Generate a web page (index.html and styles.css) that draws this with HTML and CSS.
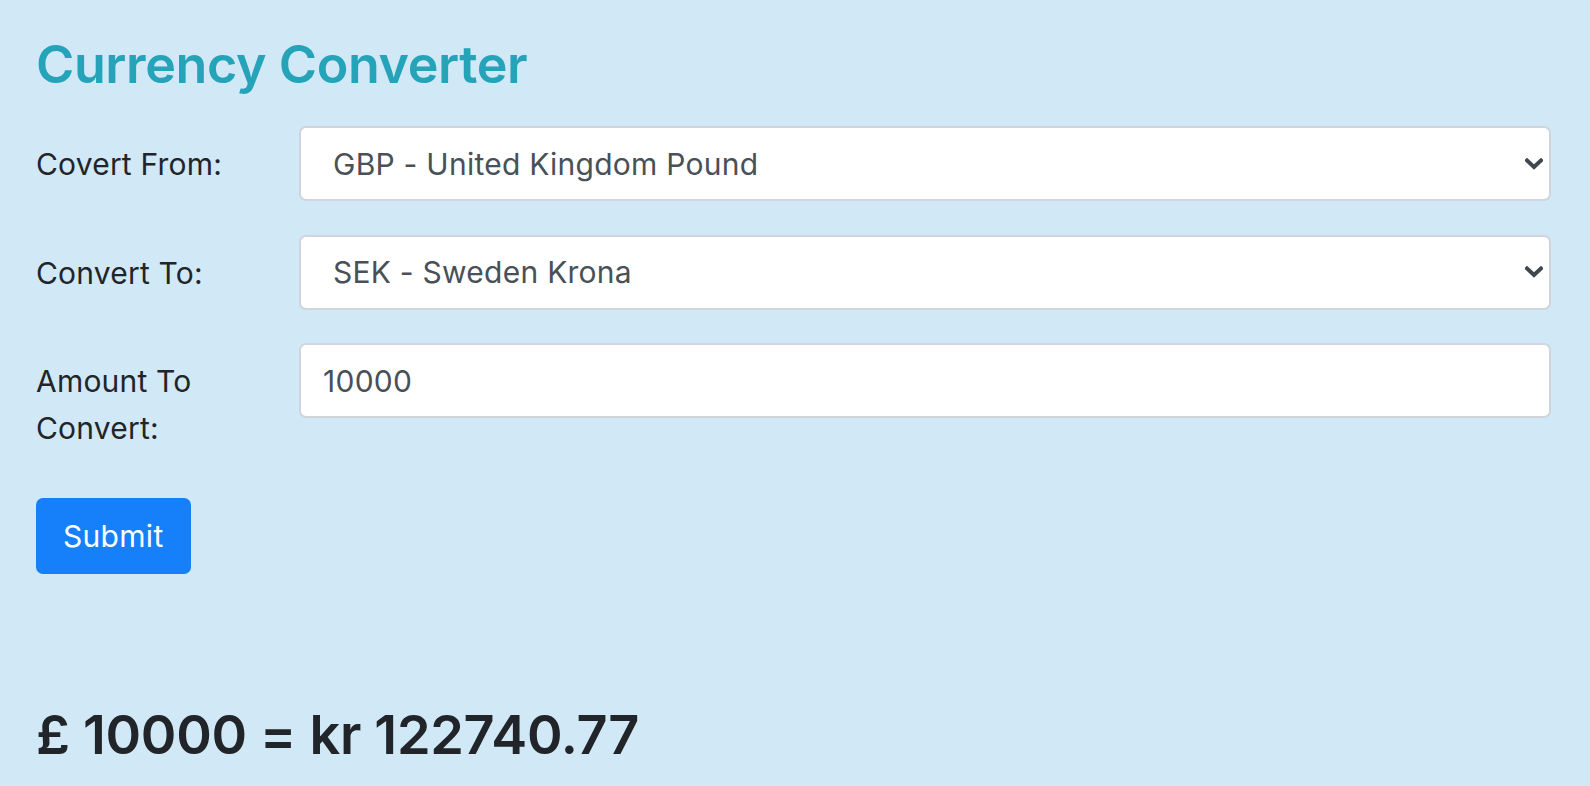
FILE: index.html
```html
<!DOCTYPE html>
<html lang="en">
<head>
<meta charset="utf-8">
<title>Currency Converter</title>
<link rel="stylesheet" href="styles.css">
</head>
<body>
<main class="page">
  <h2 class="title">Currency Converter</h2>
  <form class="form">
    <div class="row">
      <label class="label" for="from">Covert From:</label>
      <div class="select-wrap">
        <select id="from" class="control select">
          <option>GBP - United Kingdom Pound</option>
        </select>
        <svg class="chevron" width="18" height="12" viewBox="0 0 18 12" aria-hidden="true"><polyline points="2,2.5 9,9 16,2.5" fill="none" stroke="#41474e" stroke-width="4" stroke-linecap="square" stroke-linejoin="miter"/></svg>
      </div>
    </div>
    <div class="row">
      <label class="label" for="to">Convert To:</label>
      <div class="select-wrap">
        <select id="to" class="control select">
          <option>SEK - Sweden Krona</option>
        </select>
        <svg class="chevron" width="18" height="12" viewBox="0 0 18 12" aria-hidden="true"><polyline points="2,2.5 9,9 16,2.5" fill="none" stroke="#41474e" stroke-width="4" stroke-linecap="square" stroke-linejoin="miter"/></svg>
      </div>
    </div>
    <div class="row">
      <label class="label" for="amount">Amount To<br>Convert:</label>
      <input id="amount" class="control input" type="text" value="10000">
    </div>
    <button type="button" class="btn">Submit</button>
  </form>
  <h2 class="result">£ 10000 = kr 122740.77</h2>
</main>
</body>
</html>
```

FILE: styles.css
```css
html, body {
  margin: 0;
  padding: 0;
}
body {
  background: #d1e8f7;
  color: #212529;
  font-family: Inter, "Noto Sans", "Liberation Sans", sans-serif;
  font-size: 30px;
}
.page {
  padding: 0 39px 0 36px;
}
.title {
  margin: 34px 0 30px 0;
  font-size: 52px;
  font-weight: 600;
  letter-spacing: -0.4px;
  line-height: 1.2;
  color: #25a3b8;
}
.form {
  display: flex;
  flex-direction: column;
  align-items: flex-start;
}
.row {
  display: grid;
  grid-template-columns: 263px 1fr;
  align-items: start;
  width: 100%;
  margin-bottom: 32px;
}
.label {
  padding: 15px 0;
  line-height: 46.5px;
  letter-spacing: 0.2px;
}
.select-wrap {
  position: relative;
}
.control {
  box-sizing: border-box;
  width: 100%;
  height: 75px;
  margin: 0;
  background: #fff;
  border: 2px solid #cfd5db;
  border-radius: 7px;
  font-family: inherit;
  font-size: 30px;
  letter-spacing: 0.25px;
  color: #495057;
  outline: none;
}
.select {
  appearance: none;
  -webkit-appearance: none;
  padding: 0 50px 0 32px;
}
.input {
  padding: 0 22px;
}
.chevron {
  position: absolute;
  right: 8px;
  top: 50%;
  transform: translateY(-50%);
  pointer-events: none;
}
.btn {
  box-sizing: border-box;
  height: 76px;
  padding: 0 27px;
  background: #1680fb;
  color: #fff;
  border: none;
  border-radius: 7px;
  font-family: inherit;
  font-size: 30px;
  letter-spacing: 0.3px;
  cursor: pointer;
}
.result {
  margin: 129px 0 0 0;
  font-size: 54px;
  font-weight: 600;
  letter-spacing: -0.3px;
  line-height: 1.2;
}
```
